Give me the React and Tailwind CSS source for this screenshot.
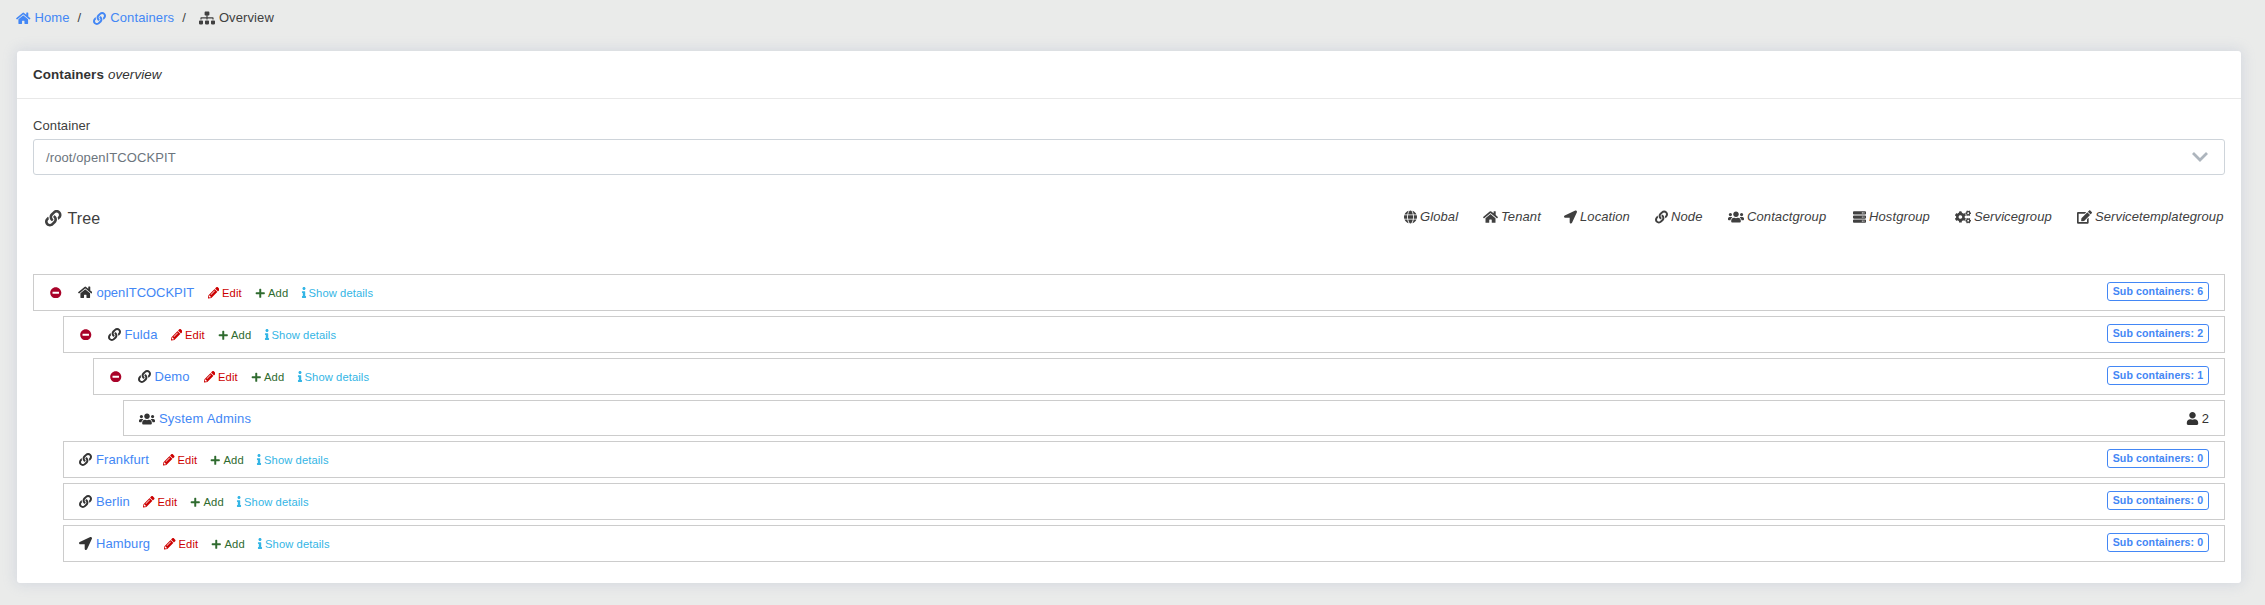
import React from "react";
import {
  FaHome, FaLink, FaSitemap, FaGlobe, FaLocationArrow, FaUsers, FaServer,
  FaCogs, FaEdit, FaPencilAlt, FaPlus, FaInfo, FaMinusCircle, FaUser,
} from "react-icons/fa";

const LEGEND = [
  { icon: FaGlobe, label: "Global", size: "w-[13px]", item: "w-[79px]" },
  { icon: FaHome, label: "Tenant", size: "w-[15px]", item: "w-[81px]" },
  { icon: FaLocationArrow, label: "Location", size: "w-[13px]", item: "w-[91px]" },
  { icon: FaLink, label: "Node", size: "w-[13px]", item: "w-[73px]" },
  { icon: FaUsers, label: "Contactgroup", size: "w-[16px]", item: "w-[125px]" },
  { icon: FaServer, label: "Hostgroup", size: "w-[13px]", item: "w-[102px]" },
  { icon: FaCogs, label: "Servicegroup", size: "w-[16px]", item: "w-[122px]" },
  { icon: FaEdit, label: "Servicetemplategroup", size: "w-[15px]", item: "w-[148px]" },
];

const TREE = [
  { name: "openITCOCKPIT", icon: FaHome, indent: "ml-0", open: true, subs: 6, iconBox: "w-[15px]", nameBox: "w-[111px] tracking-[-0.05px]" },
  { name: "Fulda", icon: FaLink, indent: "ml-[30px]", open: true, subs: 2, iconBox: "w-[13px]", nameBox: "w-[46px]" },
  { name: "Demo", icon: FaLink, indent: "ml-[60px]", open: true, subs: 1, iconBox: "w-[13px]", nameBox: "w-[49px]" },
  { name: "System Admins", icon: FaUsers, indent: "ml-[90px]", users: 2, iconBox: "w-[16px]", nameBox: "w-[111px] tracking-[0.2px]" },
  { name: "Frankfurt", icon: FaLink, indent: "ml-[30px]", subs: 0, iconBox: "w-[13px]", nameBox: "w-[67px]" },
  { name: "Berlin", icon: FaLink, indent: "ml-[30px]", subs: 0, iconBox: "w-[13px]", nameBox: "w-[47px]" },
  { name: "Hamburg", icon: FaLocationArrow, indent: "ml-[30px]", subs: 0, iconBox: "w-[13px]", nameBox: "w-[68px]" },
];

function TreeRow({ node }) {
  const Icon = node.icon;
  const group = node.users !== undefined;
  return (
    <div className={`flex items-center border border-[#cccccc] pr-[15px] ${group ? "h-9 pt-px" : "h-[37px]"} ${node.indent} ${node.open ? "pl-4" : "pl-[15px]"}`}>
      {node.open && <FaMinusCircle className="mr-4 size-[11.5px] shrink-0 text-[#a90329]" />}
      <span className={`flex shrink-0 justify-center text-[#333333] ${node.iconBox}`}>
        <Icon className={group ? "size-4" : node.icon === FaHome ? "size-[14.5px]" : "size-[13px]"} />
      </span>
      <a className={`ml-1 shrink-0 text-[#4387f5] ${node.nameBox}`}>{node.name}</a>
      {!group && (
        <div className="flex items-center pt-px text-[11.2px]">
          <a className="flex w-[47px] items-center gap-[3px] text-[#cc0000]">
            <FaPencilAlt className="size-[11.5px]" />Edit
          </a>
          <a className="flex w-[46px] items-center gap-[3px] text-[#2f6b2f]">
            <FaPlus className="size-[10.5px]" />Add
          </a>
          <a className="flex items-center gap-[2px] text-[#33b5e5]">
            <FaInfo className="h-[11px] w-[6px]" />Show details
          </a>
        </div>
      )}
      {group ? (
        <span className="ml-auto flex items-center gap-[3px] text-[#333333]">
          <FaUser className="size-[13px]" />
          {node.users}
        </span>
      ) : (
        <span className="mb-[2px] ml-auto flex h-[19px] w-[102px] items-center justify-center rounded-[3px] border border-[#4387f5] text-[10.6px] font-bold text-[#4387f5]">
          Sub containers: {node.subs}
        </span>
      )}
    </div>
  );
}

export default function App() {
  return (
    <div className="h-[605px] overflow-hidden bg-[#eaebea] px-[17px] pr-6 font-['Liberation_Sans',Arial,sans-serif] text-[13px] tracking-[0.1px] text-[#404040]">
      <nav className="-ml-px flex h-[51px] items-start pt-2 leading-[20px]">
        <a className="flex items-center gap-1 text-[#4387f5]"><FaHome className="size-[14.5px]" />Home</a>
        <span className="mx-2">/</span>
        <a className="ml-1 flex items-center gap-1 text-[#4387f5]"><FaLink className="size-[13px]" />Containers</a>
        <span className="mx-2">/</span>
        <span className="ml-[5px] flex items-center gap-1"><FaSitemap className="size-4" />Overview</span>
      </nav>
      <main className="h-[532px] rounded-[3px] bg-white shadow-[0_0_13px_2px_rgba(130,145,185,0.2)]">
        <header className="flex h-12 items-center gap-1 border-b border-[#e8e8e8] px-4 pt-px text-[13.4px] text-[#333333]">
          <h1 className="font-bold">Containers</h1>
          <span className="italic">overview</span>
        </header>
        <div className="px-4 pt-[17px]">
          <label className="block h-[23px] leading-5">Container</label>
          <div className="flex h-9 items-center justify-between rounded-[3px] border border-[#ced4da] pl-3 pr-4 text-[#6c757d]">
            <span className="pt-[2px]">/root/openITCOCKPIT</span>
            <svg viewBox="0 0 16 10" className="h-[10px] w-4 fill-none stroke-[#adb5bd] stroke-[2.8]">
              <path d="M1 1 L8 8 L15 1" />
            </svg>
          </div>
          <div className="flex h-[99px] items-start justify-between pl-3">
            <h2 className="flex items-center gap-[6px] pt-[31px] text-[16px] leading-6">
              <FaLink className="size-[16.5px]" /><span className="pt-px">Tree</span>
            </h2>
            <div className="flex pt-8 italic leading-5">
              {LEGEND.map(({ icon: Icon, label, size, item }) => (
                <span key={label} className={`flex items-center gap-[3px] ${item}`}>
                  <Icon className={`-mt-px h-[14px] shrink-0 ${size}`} />{label}
                </span>
              ))}
            </div>
          </div>
          <div className="flex flex-col gap-[5px]">
            {TREE.map((node) => <TreeRow key={node.name} node={node} />)}
          </div>
        </div>
      </main>
    </div>
  );
}
